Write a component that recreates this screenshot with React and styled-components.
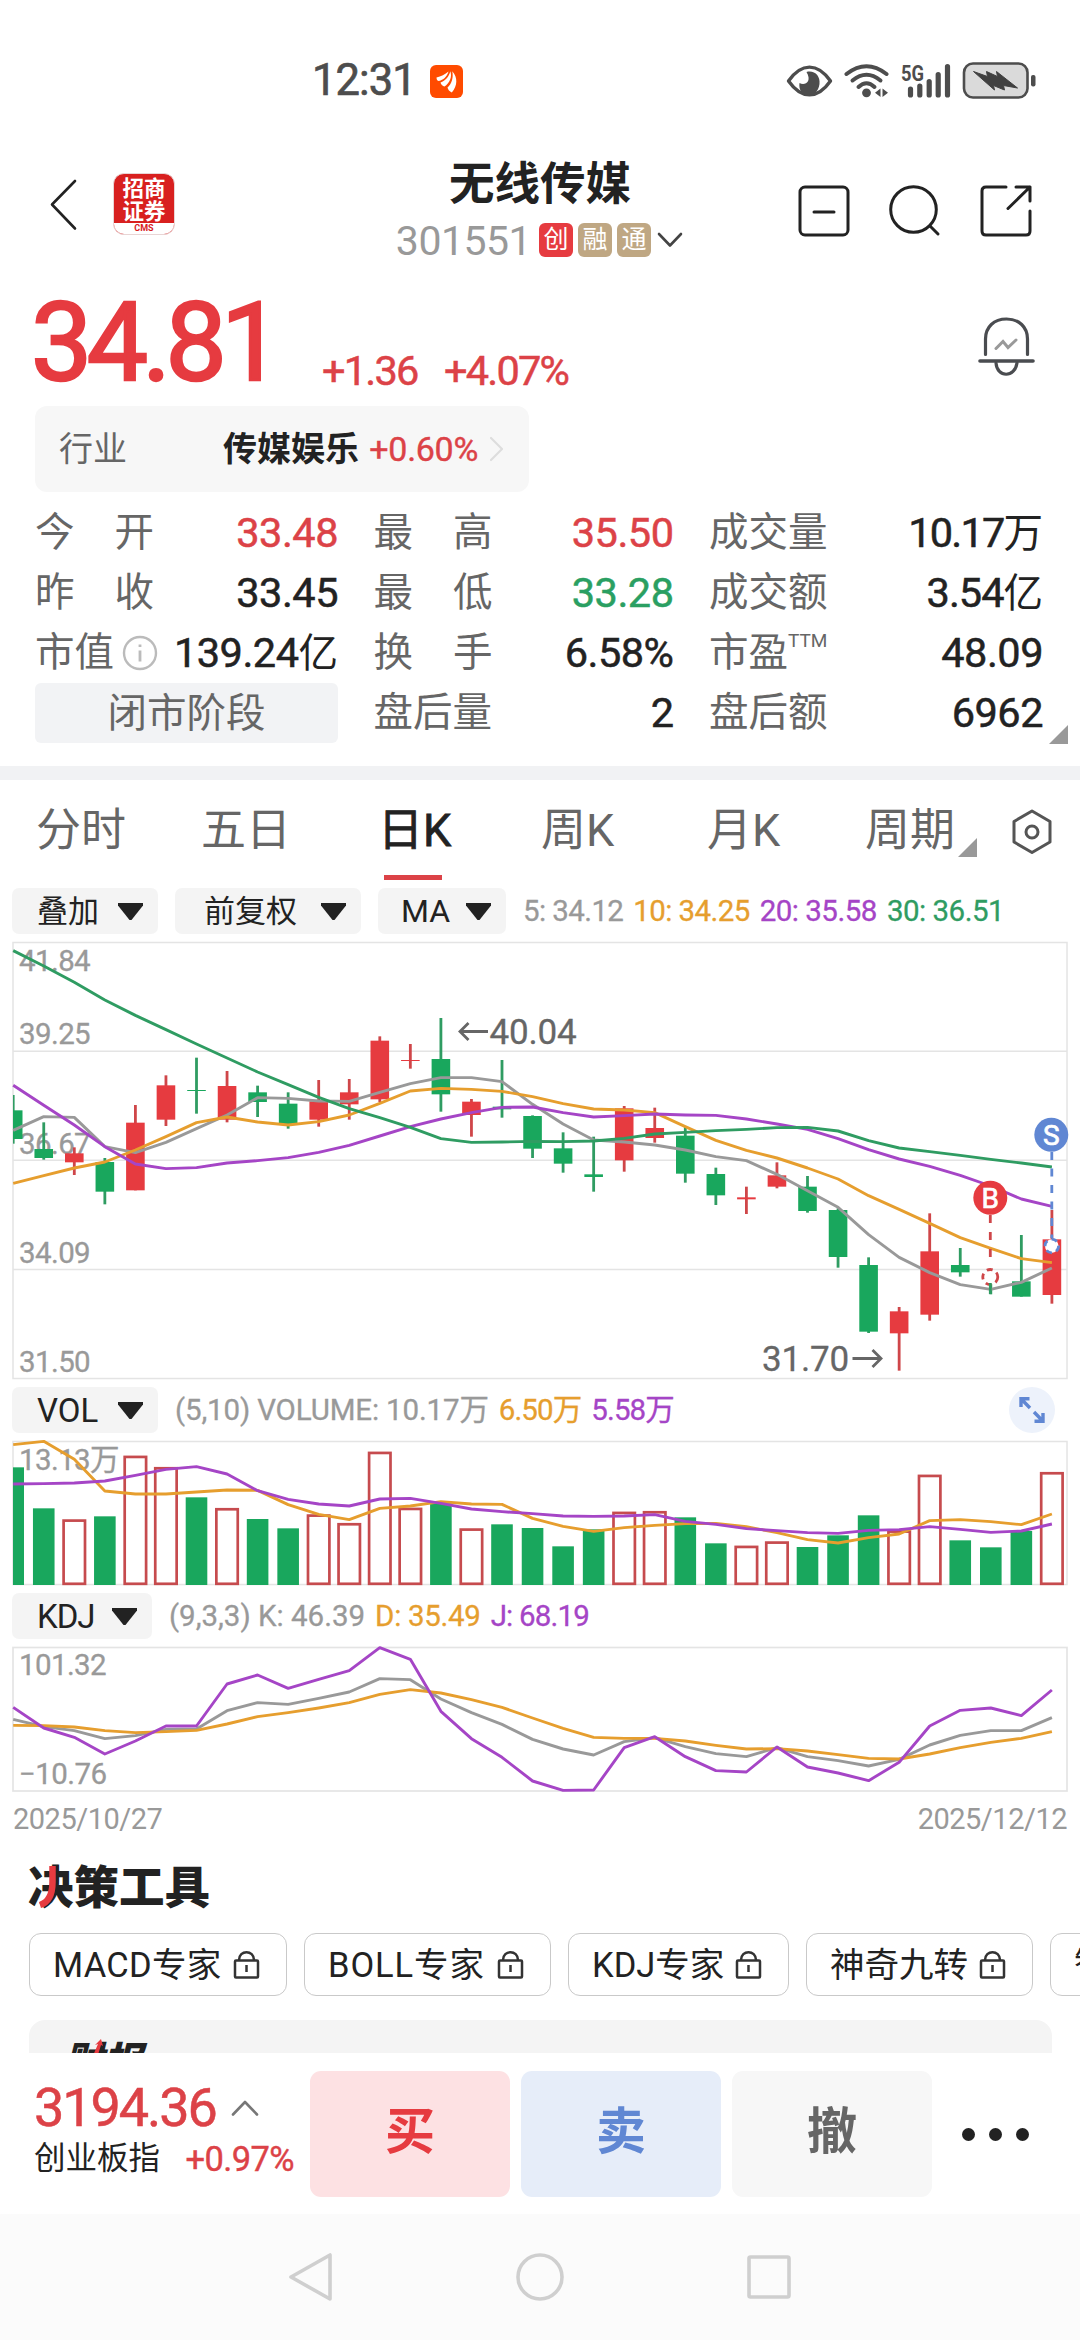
import React from "react";
import styled, { createGlobalStyle } from "styled-components";

const RED = "#e63b40";
const TEXT_RED = "#dc4247";
const GREEN = "#19a75d";
const ORANGE = "#e69e2e";
const PURPLE = "#a545c6";
const GRAY = "#999999";

const GlobalStyle = createGlobalStyle`
  * {
    box-sizing: border-box;
  }
  body {
    margin: 0;
    background: #fff;
    font-family: Roboto, "Noto Sans CJK SC", sans-serif;
    color: #222;
  }
  svg {
    display: block;
    flex-shrink: 0;
  }
  text {
    font-family: Roboto, "Noto Sans CJK SC", sans-serif;
  }
`;

const Screen = styled.div`
  display: flex;
  flex-direction: column;
  width: 1080px;
  height: 2340px;
  overflow: hidden;
  background: #fff;
  white-space: nowrap;
`;

/* ---------- status bar ---------- */

const StatusBar = styled.div`
  display: flex;
  align-items: center;
  height: 140px;
  padding: 22px 43px 0 312px;
  flex-shrink: 0;
`;

const Clock = styled.span`
  width: 118px;
  font-size: 43.5px;
  line-height: 50px;
  letter-spacing: -0.9px;
  color: #4d4d4d;
  -webkit-text-stroke: 0.7px #4d4d4d;
`;

const StatusIcons = styled.div`
  display: flex;
  align-items: center;
  margin-left: auto;
`;

/* ---------- header ---------- */

const Header = styled.header`
  display: flex;
  height: 130px;
  flex-shrink: 0;
`;

const HeaderLeft = styled.div`
  display: flex;
  align-items: flex-start;
  width: 380px;
  padding: 33px 0 0 48px;
`;

const BrandLogo = styled.div`
  display: flex;
  flex-direction: column;
  width: 62px;
  height: 62px;
  margin-left: 35px;
  border-radius: 11px;
  overflow: hidden;
  background: #d8201f;
  border: 1px solid #e9d5d5;
  color: #fff;
  font-size: 21.5px;
  line-height: 23px;
  font-weight: 700;
  text-align: center;
  padding-top: 3px;
`;

const BrandFoot = styled.div`
  margin-top: auto;
  height: 11px;
  background: #fff;
  color: #d8201f;
  font-size: 9px;
  line-height: 10px;
`;

const TitleBlock = styled.div`
  display: flex;
  flex-direction: column;
  align-items: center;
  width: 320px;
  padding-top: 15px;
`;

const Title = styled.h1`
  margin: 0;
  font-size: 45.5px;
  line-height: 60px;
  font-weight: 700;
  color: #222;
`;

const CodeRow = styled.div`
  display: flex;
  align-items: center;
  gap: 5px;
  height: 50px;
`;

const Code = styled.span`
  font-size: 41px;
  line-height: 52px;
  letter-spacing: -0.5px;
  color: #999;
  margin-right: 3px;
  padding-top: 2px;
`;

const Tag = styled.span`
  width: 34px;
  height: 34px;
  border-radius: 6px;
  background: ${({ $red }) => ($red ? RED : "#bfa783")};
  color: #fff;
  font-size: 25px;
  line-height: 33px;
  text-align: center;
`;

const HeaderIcons = styled.div`
  display: flex;
  gap: 37px;
  margin-left: auto;
  padding: 44px 47px 0 0;
`;

/* ---------- quote ---------- */

const QuoteRow = styled.div`
  display: flex;
  height: 136px;
  padding-left: 31px;
  flex-shrink: 0;
`;

const Price = styled.div`
  width: 291px;
  font-size: 109px;
  line-height: 146px;
  letter-spacing: -5.6px;
  color: ${RED};
  -webkit-text-stroke: 2.4px ${RED};
`;

const Change = styled.div`
  width: 122px;
  padding-top: 76px;
  font-size: 41.5px;
  line-height: 50px;
  letter-spacing: -1.8px;
  color: ${TEXT_RED};
  -webkit-text-stroke: 0.5px ${TEXT_RED};
`;

const BellWrap = styled.div`
  margin-left: auto;
  padding: 44px 45px 0 0;
`;

const Industry = styled.div`
  display: flex;
  align-items: center;
  width: 494px;
  height: 86px;
  margin-left: 35px;
  padding: 0 24px;
  border-radius: 12px;
  background: #f7f7f7;
  font-size: 34px;
  line-height: 50px;
  color: #666;
  flex-shrink: 0;
`;

const IndustryName = styled.b`
  margin-left: 96px;
  width: 148px;
  font-weight: 700;
  color: #222;
`;

const IndustryChange = styled.span`
  width: 121px;
  letter-spacing: -0.3px;
  color: ${TEXT_RED};
  -webkit-text-stroke: 0.4px ${TEXT_RED};
`;

const Stats = styled.div`
  display: grid;
  grid-template-columns: 303px 300px 334px;
  column-gap: 35.5px;
  grid-auto-rows: 60px;
  margin: 11px 0 0 35px;
  height: 251px;
  flex-shrink: 0;
`;

const Stat = styled.div`
  display: flex;
  align-items: center;
  justify-content: space-between;
  font-size: 39.5px;
  line-height: 60px;
`;

const StatLabel = styled.span`
  display: flex;
  align-items: center;
  justify-content: space-between;
  width: ${({ $spread }) => ($spread ? "119px" : "auto")};
  color: #666;
`;

const StatValue = styled.span`
  font-size: 41.5px;
  letter-spacing: ${({ $ls }) => $ls}px;
  color: ${({ $color }) => $color || "#222"};
  -webkit-text-stroke: 0.5px currentColor;

  small {
    font-size: 39.5px;
    letter-spacing: 0;
    -webkit-text-stroke: 0;
  }
`;

const Superscript = styled.span`
  align-self: flex-start;
  margin-top: -12px;
  font-size: 19px;
`;

const Phase = styled.div`
  height: 60px;
  border-radius: 6px;
  background: #f2f3f5;
  color: #666;
  font-size: 39.5px;
  line-height: 61px;
  text-align: center;
`;

const CornerRow = styled.div`
  display: flex;
  justify-content: flex-end;
  height: 19px;
  margin-top: -29px;
  padding-right: 12px;
  margin-bottom: 22px;
  flex-shrink: 0;
`;

const Corner = styled.i`
  width: 19px;
  height: 19px;
  background: #999;
  clip-path: polygon(100% 0, 100% 100%, 0 100%);
`;

const Divider = styled.div`
  height: 14px;
  background: #f1f2f4;
  flex-shrink: 0;
`;

/* ---------- chart tabs and indicator bars ---------- */

const Tabs = styled.nav`
  display: grid;
  grid-template-columns: 165px 177px 163px 166px 158px 146px 41px;
  height: 108px;
  padding-left: 36px;
  flex-shrink: 0;
`;

const Tab = styled.div`
  display: flex;
  flex-direction: column;
  align-items: flex-start;
  padding-top: 3px;
  font-size: 45px;
  line-height: 95px;
  color: ${({ $active }) => ($active ? "#222" : "#666")};
  -webkit-text-stroke: ${({ $active }) => ($active ? "0.8px #222" : "0")};

  &::after {
    content: "";
    width: 58px;
    height: 5px;
    margin: -3px 0 0 6px;
    background: ${({ $active }) => ($active ? TEXT_RED : "transparent")};
  }
`;

const TabLine = styled.span`
  display: flex;
  align-items: flex-end;

  ${Corner} {
    margin: 0 0 21px 3px;
  }
`;

const Hexagon = styled.div`
  padding-top: 28px;
`;

const Bar = styled.div`
  display: flex;
  align-items: center;
  height: 46px;
  padding: 0 25px 0 12px;
  flex-shrink: 0;
`;

const Picker = styled.div`
  display: flex;
  align-items: center;
  justify-content: space-between;
  width: ${({ $w }) => $w}px;
  height: 46px;
  margin-right: 17px;
  padding: 1px 15px 0 ${({ $pad }) => $pad || 25}px;
  border-radius: 7px;
  background: #f4f4f4;
  font-size: ${({ $size }) => $size || 31}px;
  line-height: 45px;
  letter-spacing: ${({ $ls }) => $ls || 0}px;
  color: #222;

  &::after {
    content: "";
    width: 25px;
    height: 17px;
    background: #222;
    clip-path: polygon(0 0, 100% 0, 100% 15%, 54% 100%, 46% 100%, 0 15%);
  }
`;

const Legend = styled.div`
  display: flex;
  gap: 10px;
  padding-top: 1px;
  font-size: 29.5px;
  line-height: 45px;
`;

const Reading = styled.span`
  color: ${({ $color }) => $color};
  letter-spacing: ${({ $ls }) => $ls || 0}px;
  -webkit-text-stroke: 0.3px currentColor;
`;

const Expand = styled.div`
  display: flex;
  align-items: center;
  justify-content: center;
  width: 46px;
  height: 46px;
  margin-left: auto;
  border-radius: 50%;
  background: #edf2fb;
`;

const Dates = styled.div`
  display: flex;
  justify-content: space-between;
  height: 56px;
  padding: 0 13px;
  font-size: 29px;
  line-height: 40px;
  letter-spacing: -0.5px;
  color: #999;
  flex-shrink: 0;
`;

/* ---------- tools ---------- */

const ToolsTitle = styled.h2`
  display: flex;
  position: relative;
  margin: 0;
  height: 78px;
  padding-left: 28px;
  font-size: 45.5px;
  line-height: 67px;
  font-weight: 900;
  color: #222;
  flex-shrink: 0;
`;

const TitleStroke = styled.svg`
  position: absolute;
  left: 35px;
  top: 10px;
`;

const ToolRow = styled.div`
  display: flex;
  gap: 17px;
  height: 63px;
  padding-left: 29px;
  flex-shrink: 0;
`;

const Tool = styled.div`
  display: flex;
  align-items: center;
  justify-content: space-between;
  width: ${({ $w }) => $w}px;
  height: 63px;
  padding: 0 26px 0 23px;
  border: 1.5px solid #c9c9c9;
  border-radius: 12px;
  font-size: 34.5px;
  line-height: 60px;
  letter-spacing: ${({ $ls }) => $ls || 0}px;
  flex-shrink: 0;
`;

const ReportCard = styled.div`
  position: relative;
  height: 33px;
  margin: 24px 28px 0 29px;
  padding: 18px 0 0 35px;
  border-radius: 16px 16px 0 0;
  background: #f4f4f4;
  overflow: hidden;
  font-size: 39px;
  line-height: 48px;
  font-weight: 900;
  font-style: italic;
  flex-shrink: 0;
`;

const ReportAccent = styled.svg`
  position: absolute;
  left: 59px;
  top: 18px;
`;

/* ---------- trade bar ---------- */

const TradeBar = styled.footer`
  display: flex;
  height: 161px;
  padding: 18px 0 0 34px;
  flex-shrink: 0;
`;

const IndexBlock = styled.div`
  width: 276px;
`;

const IndexTop = styled.div`
  display: flex;
  align-items: center;
  height: 73px;
  font-size: 54px;
  letter-spacing: -2.1px;
  color: ${TEXT_RED};
  gap: 15px;
  -webkit-text-stroke: 0.5px ${TEXT_RED};
`;

const IndexBottom = styled.div`
  display: flex;
  justify-content: space-between;
  height: 46px;
  padding-right: 16px;
  font-size: 31.5px;
  line-height: 30px;
`;

const IndexChange = styled.span`
  font-size: 34.5px;
  letter-spacing: -0.6px;
  color: ${TEXT_RED};
  -webkit-text-stroke: 0.4px ${TEXT_RED};
`;

const TradeButton = styled.button`
  width: 200px;
  height: 126px;
  margin-right: 11px;
  border: none;
  border-radius: 11px;
  background: ${({ $bg }) => $bg};
  color: ${({ $fg }) => $fg};
  font-family: inherit;
  font-size: 50px;
  line-height: 122px;
  font-weight: 700;
  padding: 0 0 4px;
`;

const More = styled.div`
  display: flex;
  align-items: center;
  gap: 14px;
  height: 126px;
  margin-left: 19px;

  i {
    width: 13px;
    height: 13px;
    border-radius: 50%;
    background: #222;
  }
`;

const SystemNav = styled.div`
  display: flex;
  justify-content: center;
  align-items: center;
  gap: 182px;
  height: 126px;
  background: #fbfbfb;
  flex-shrink: 0;
`;

/* ---------- chart data, y values in thirds of a pixel ---------- */

// [up, wick top, body top, body bottom, wick bottom]
const CANDLES = [
  [0, 495, 541, 627, 641],
  [0, 577, 657, 684, 689],
  [1, 652, 670, 697, 735],
  [0, 684, 696, 785, 823],
  [1, 525, 578, 781, 781],
  [1, 436, 466, 569, 588],
  [0, 383, 480, 483, 551],
  [1, 423, 468, 569, 577],
  [0, 467, 487, 516, 561],
  [0, 487, 521, 582, 596],
  [1, 450, 514, 569, 590],
  [1, 447, 487, 523, 569],
  [1, 319, 332, 508, 516],
  [1, 342, 390, 393, 416],
  [0, 264, 387, 493, 545],
  [1, 507, 515, 555, 620],
  [0, 390, 530, 538, 563],
  [0, 556, 558, 656, 684],
  [0, 607, 655, 701, 728],
  [0, 620, 733, 741, 785],
  [1, 528, 535, 691, 725],
  [1, 533, 594, 624, 638],
  [0, 588, 617, 731, 758],
  [0, 713, 732, 796, 825],
  [1, 770, 802, 808, 852],
  [1, 697, 736, 770, 775],
  [0, 738, 770, 843, 848],
  [0, 835, 840, 981, 1013],
  [0, 982, 1005, 1205, 1209],
  [1, 1131, 1144, 1210, 1322],
  [1, 850, 964, 1154, 1172],
  [0, 954, 1005, 1027, 1040],
  [0, 1060, 1078, 1078, 1093],
  [0, 915, 1054, 1100, 1100],
  [1, 840, 928, 1095, 1121],
];

const MA = [
  [GRAY, [601, 560, 562, 650, 668, 637, 596, 555, 503, 505, 513, 514, 487, 461, 443, 443, 455, 523, 582, 630, 636, 645, 660, 680, 692, 733, 782, 832, 914, 982, 1028, 1064, 1078, 1057, 1014]],
  [ORANGE, [760, 737, 714, 696, 660, 620, 578, 561, 576, 585, 575, 555, 520, 483, 475, 478, 484, 500, 521, 537, 540, 548, 590, 631, 661, 684, 714, 747, 797, 838, 880, 923, 955, 986, 998]],
  [PURPLE, [466, 526, 585, 650, 702, 716, 713, 699, 692, 683, 667, 646, 618, 590, 567, 548, 532, 531, 548, 561, 557, 552, 555, 556, 567, 582, 598, 626, 659, 687, 709, 736, 768, 807, 829]],
  ["#2f9c62", [62, 108, 157, 210, 256, 299, 342, 384, 426, 464, 502, 536, 563, 592, 626, 637, 636, 634, 635, 633, 625, 612, 607, 602, 598, 593, 592, 603, 632, 654, 665, 676, 688, 699, 711]],
];

const VOLUMES = [
  262, 385, 420, 409, 229, 263, 352, 386, 417, 445, 405, 431, 217, 385, 370, 447, 433, 444, 499,
  448, 397, 395, 412, 490, 499, 486, 501, 466, 406, 453, 286, 481, 502, 453, 278,
];

const VOL_LINES = [
  [ORANGE, [194, 184, 238, 333, 342, 342, 336, 330, 331, 374, 403, 419, 385, 378, 365, 372, 373, 415, 439, 454, 443, 436, 431, 430, 440, 458, 479, 489, 473, 462, 422, 419, 425, 434, 402]],
  [PURPLE, [312, 311, 309, 303, 286, 268, 260, 282, 332, 358, 372, 378, 357, 355, 370, 387, 395, 401, 408, 409, 408, 404, 424, 433, 446, 452, 458, 460, 451, 449, 440, 448, 457, 453, 432]],
];

const KDJ_LINES = [
  [GRAY, [1018, 1040, 1052, 1076, 1067, 1048, 1047, 992, 968, 973, 955, 936, 896, 899, 957, 998, 1033, 1078, 1107, 1125, 1085, 1073, 1100, 1121, 1130, 1103, 1130, 1142, 1158, 1138, 1095, 1066, 1052, 1052, 1013]],
  [ORANGE, [1036, 1037, 1041, 1052, 1058, 1055, 1051, 1032, 1010, 998, 984, 968, 943, 929, 939, 959, 982, 1014, 1045, 1072, 1075, 1075, 1083, 1096, 1107, 1106, 1113, 1124, 1135, 1137, 1122, 1103, 1087, 1075, 1055]],
  [PURPLE, [982, 1044, 1072, 1122, 1083, 1038, 1038, 912, 885, 925, 898, 872, 803, 838, 994, 1076, 1132, 1203, 1231, 1230, 1103, 1070, 1130, 1172, 1176, 1101, 1161, 1179, 1202, 1147, 1038, 991, 984, 1007, 930]],
];

const cx = (i) => 13.2 + i * 30.55;

function Lines({ series }) {
  return series.map(([color, values]) => (
    <polyline
      key={color}
      points={values.map((v, i) => `${cx(i)},${v / 3}`).join(" ")}
      fill="none"
      stroke={color}
      strokeWidth="2.9"
      strokeLinejoin="round"
    />
  ));
}

function AxisText({ y, children }) {
  return (
    <text x="19" y={y} fontSize="29.5" letterSpacing="-0.6" fill={GRAY} stroke={GRAY} strokeWidth="0.3">
      {children}
    </text>
  );
}

function Marker({ x, y, color, children }) {
  return (
    <>
      <circle cx={x} cy={y} r="17" fill={color} />
      <text x={x} y={y + 9.8} fontSize="28" textAnchor="middle" fill="#fff" stroke="#fff" strokeWidth="0.7">
        {children}
      </text>
    </>
  );
}

function PriceChart() {
  return (
    <svg width="1080" height="453" viewBox="0 4 1080 453">
      <g stroke="#e4e4e4" strokeWidth="1.5" fill="none">
        <rect x="13" y="12.5" width="1054" height="436" />
        <path d="M13 121.2H1067M13 230.3H1067M13 339.5H1067" />
      </g>
      <AxisText y="40.5">41.84</AxisText>
      <AxisText y="114">39.25</AxisText>
      <AxisText y="223.5">36.67</AxisText>
      <AxisText y="332.5">34.09</AxisText>
      <AxisText y="441.5">31.50</AxisText>
      {CANDLES.map(([up, high, top, bottom, low], i) => {
        const x = cx(i);
        const left = i === 0 ? 13 : x - 9.3;
        return (
          <g key={i} fill={up ? RED : GREEN}>
            <rect
              x={i === 0 ? 13 : x - 1.4}
              y={high / 3}
              width={i === 0 ? 1.6 : 2.8}
              height={(low - high) / 3}
              fill={up ? "#cf4649" : "#2f9c62"}
            />
            <rect x={left} y={top / 3} width={x + 9.3 - left} height={(bottom - top) / 3} />
          </g>
        );
      })}
      <Lines series={MA} />

      <g fontSize="35" fill="#666" stroke="#666" strokeWidth="0.3" letterSpacing="-0.2">
        <text x="489.5" y="114">
          40.04
        </text>
        <text x="762" y="441">
          31.70
        </text>
      </g>
      <g stroke="#666" strokeWidth="2.8" fill="none">
        <path d="M488 101.5H460M468.5 93L460 101.5L468.5 110" />
        <path d="M852.5 428.5H881M872.5 420L881 428.5L872.5 437" />
      </g>

      <path d="M990.3 285V333" stroke="#cf4649" strokeWidth="2.8" strokeDasharray="8 9" />
      <circle cx="990.3" cy="347" r="7.5" fill="#fff" stroke="#cf4649" strokeWidth="2.8" strokeDasharray="6 4.5" />
      <path d="M990.3 353V364" stroke="#2f9c62" strokeWidth="2.8" />
      <Marker x={990.3} y={267.7} color={RED}>
        B
      </Marker>

      <path d="M1051.8 222V308" stroke="#6087d3" strokeWidth="2.8" strokeDasharray="8 8.5" />
      <circle cx="1051.8" cy="316" r="6.8" fill="#fff" stroke="#6087d3" strokeWidth="2.8" strokeDasharray="6 4.5" />
      <Marker x={1051.3} y={204.7} color="#6087d3">
        S
      </Marker>
    </svg>
  );
}

function VolumeChart() {
  return (
    <svg width="1080" height="160" viewBox="0 53 1080 160">
      <rect x="13" y="61.5" width="1054" height="143" fill="none" stroke="#e4e4e4" strokeWidth="1.5" />
      {VOLUMES.map((v, i) => {
        const x = cx(i);
        const y = v / 3;
        if (CANDLES[i][0]) {
          return (
            <rect key={i} x={x - 10.7} y={y + 0.6} width="21.4" height={203.2 - y} fill="#fff" stroke="#c64b4e" strokeWidth="2.7" />
          );
        }
        const left = i === 0 ? 13 : x - 10.8;
        return <rect key={i} x={left} y={y} width={x + 10.8 - left} height={205 - y} fill={GREEN} />;
      })}
      <AxisText y="89.5">13.13万</AxisText>
      <Lines series={VOL_LINES} />
    </svg>
  );
}

function KdjChart() {
  return (
    <svg width="1080" height="160" viewBox="0 259 1080 160">
      <rect x="13" y="267.5" width="1054" height="143.5" fill="none" stroke="#e4e4e4" strokeWidth="1.7" />
      <AxisText y="295">101.32</AxisText>
      <AxisText y="404">−10.76</AxisText>
      <Lines series={KDJ_LINES} />
    </svg>
  );
}

/* ---------- icons ---------- */

function AppBadge() {
  return (
    <svg width="33" height="33" viewBox="0 0 33 33">
      <rect width="33" height="33" rx="6" fill="#ff4b00" />
      <path d="M6.500 12.500C11 11.500 15 9.500 18.500 6.500C17 12 12.500 15.500 8.500 16C7 15.500 6.500 14 6.500 12.500Z" fill="#fff" />
      <path d="M10.500 17.500C15.500 15.500 19 11.500 20.300 6.200C22.500 12 19.500 18 14.500 21.500C12.500 21 11 19.500 10.500 17.500Z" fill="#fff" />
      <path d="M17.500 22.500C22 18.500 23.500 12.500 22.300 6.200C28 12.500 27.500 21 21.800 27.500C19.500 26.500 18 24.500 17.500 22.500Z" fill="#fff" />
    </svg>
  );
}

function StatusGlyphs() {
  return (
    <svg width="254" height="40" viewBox="783.5 61 254 40">
      <g fill="none" stroke="#4d4d4d" strokeLinecap="round" strokeLinejoin="round">
        <path d="M789 81C802 62.5 818 62.5 831 81C818 99.5 802 99.5 789 81Z" strokeWidth="3.4" />
        <path d="M847 74Q867 58.500 887 74" strokeWidth="4" />
        <path d="M853 80.5Q867 69 881 80.5" strokeWidth="4" />
        <path d="M859 87Q867 79.5 875 87" strokeWidth="4" />
        <path d="M911 89V95M920.3 86V95M929.7 81.5V95M938.7 74.5V95M948 66.5V95" strokeWidth="5.2" />
      </g>
      <path d="M807 72C815 70 821 76 820 84C819 92 814 95 809 95C802 95 799 89 800 83C805 86 813 82 807 72Z" fill="#4d4d4d" />
      <circle cx="867" cy="92.8" r="4.4" fill="#4d4d4d" />
      <path d="M881 88.5V97L875.5 92.7ZM883 88.5V97L888.5 92.7Z" fill="#4d4d4d" />
      <text x="901.5" y="80.500" fontSize="22" fontWeight="700" fill="#4d4d4d" textLength="23" lengthAdjust="spacingAndGlyphs">
        5G
      </text>
      <rect x="964.5" y="63.5" width="63.500" height="34" rx="9" fill="#dadada" stroke="#4d4d4d" strokeWidth="2.6" />
      <path d="M974 71.5L988 76.5L987 71.5L998 76.5L997 71.5L1018 88L1004 85.5L1005 90L994 85.5L995 90Z" fill="#404040" stroke="#404040" strokeLinejoin="round" />
      <rect x="1031.5" y="75" width="4.5" height="11.5" rx="2" fill="#4d4d4d" />
    </svg>
  );
}

function BackIcon() {
  return (
    <svg width="30" height="62" viewBox="48 173 30 62">
      <path d="M75 181L52 204.5L75 228.5" fill="none" stroke="#222" strokeWidth="2.6" strokeLinecap="round" strokeLinejoin="round" />
    </svg>
  );
}

function HeaderGlyph({ children }) {
  return (
    <svg width="54" height="54" viewBox="0 0 54 54" fill="none" stroke="#222" strokeWidth="3" strokeLinecap="round" strokeLinejoin="round">
      {children}
    </svg>
  );
}

function BellIcon() {
  return (
    <svg width="58" height="62" viewBox="0 0 58 62" fill="none" stroke="#4a4c50" strokeWidth="3.2" strokeLinecap="round">
      <path d="M8.500 40.5V25C8.500 13 17 5 29.500 5C42 5 50.500 13 50.500 25V40.5" />
      <path d="M3 47H56" strokeWidth="3.600" />
      <path d="M19 49C20 64 38 64 40 49" />
      <path d="M19 34.500L26 27.500L31 33.500L39 26" stroke="#999" strokeWidth="3" />
    </svg>
  );
}

function Chevron({ d, w, h, color, sw = 2.6 }) {
  return (
    <svg width={w} height={h} fill="none" stroke={color} strokeWidth={sw} strokeLinecap="round" strokeLinejoin="round">
      <path d={d} />
    </svg>
  );
}

function InfoIcon() {
  return (
    <svg width="36" height="36" viewBox="0 0 36 36" fill="none" stroke="#bbb" strokeWidth="2.4">
      <circle cx="18" cy="18" r="16" />
      <path d="M18 15.5V26.5M18 9.5V12" strokeWidth="2.8" />
    </svg>
  );
}

function LockIcon() {
  return (
    <svg width="27" height="30" viewBox="0 0 27 30" fill="none" stroke="#333" strokeWidth="2.5" strokeLinejoin="round">
      <rect x="2" y="10.5" width="23" height="17" rx="1" />
      <path d="M6 10C6 -0.5 21 -0.5 21 10M13.5 15V22" />
    </svg>
  );
}

const STATS = [
  { label: "今开", value: "33.48", color: TEXT_RED },
  { label: "最高", value: "35.50", color: TEXT_RED },
  { label: "成交量", value: "10.17", unit: "万", ls: -1.8 },
  { label: "昨收", value: "33.45" },
  { label: "最低", value: "33.28", color: "#2a9f62" },
  { label: "成交额", value: "3.54", unit: "亿", ls: -1 },
  { label: "市值", value: "139.24", unit: "亿", info: true },
  { label: "换手", value: "6.58%" },
  { label: "市盈", value: "48.09", ttm: true },
  { phase: "闭市阶段" },
  { label: "盘后量", value: "2" },
  { label: "盘后额", value: "6962" },
];

function StatCell({ label, value, color, unit, info, ttm, phase, ls = -0.5 }) {
  if (phase) return <Phase>{phase}</Phase>;
  const spread = label.length === 2 && !info && !ttm;
  return (
    <Stat>
      <StatLabel $spread={spread}>
        {spread ? [...label].map((c) => <span key={c}>{c}</span>) : <span>{label}</span>}
        {info && (
          <>
            &#8202;&#8202;
            <InfoIcon />
          </>
        )}
        {ttm && <Superscript>TTM</Superscript>}
      </StatLabel>
      <StatValue $color={color} $ls={ls}>
        {value}
        {unit && <small>{unit}</small>}
      </StatValue>
    </Stat>
  );
}

function App() {
  return (
    <>
      <GlobalStyle />
      <Screen>
        <StatusBar>
          <Clock>12:31</Clock>
          <AppBadge />
          <StatusIcons>
            <StatusGlyphs />
          </StatusIcons>
        </StatusBar>

        <Header>
          <HeaderLeft>
            <BackIcon />
            <BrandLogo>
              <span>招商</span>
              <span>证券</span>
              <BrandFoot>CMS</BrandFoot>
            </BrandLogo>
          </HeaderLeft>
          <TitleBlock>
            <Title>无线传媒</Title>
            <CodeRow>
              <Code>301551</Code>
              <Tag $red>创</Tag>
              <Tag>融</Tag>
              <Tag>通</Tag>
              <Chevron w={28} h={16} d="M3 2L14 13.5L25 2" color="#444" />
            </CodeRow>
          </TitleBlock>
          <HeaderIcons>
            <HeaderGlyph>
              <rect x="3" y="3" width="48" height="48" rx="5" />
              <path d="M17 28H37" />
            </HeaderGlyph>
            <HeaderGlyph>
              <circle cx="25.5" cy="25.5" r="22.8" />
              <path d="M42 42L50 50" />
            </HeaderGlyph>
            <HeaderGlyph>
              <path d="M27 3H7Q3 3 3 7V47Q3 51 7 51H47Q51 51 51 47V27M37 3H51V17M51 3L29 24.5" />
            </HeaderGlyph>
          </HeaderIcons>
        </Header>

        <QuoteRow>
          <Price>34.81</Price>
          <Change>+1.36</Change>
          <Change>+4.07%</Change>
          <BellWrap>
            <BellIcon />
          </BellWrap>
        </QuoteRow>

        <Industry>
          行业
          <IndustryName>传媒娱乐</IndustryName>
          <IndustryChange>+0.60%</IndustryChange>
          <Chevron w={16} h={28} d="M2 3L13 14L2 25" color="#ddd" sw={2.2} />
        </Industry>

        <Stats>
          {STATS.map((s) => (
            <StatCell key={s.label || s.phase} {...s} />
          ))}
        </Stats>
        <CornerRow>
          <Corner />
        </CornerRow>

        <Divider />

        <Tabs>
          <Tab>分时</Tab>
          <Tab>五日</Tab>
          <Tab $active>日K</Tab>
          <Tab>周K</Tab>
          <Tab>月K</Tab>
          <Tab>
            <TabLine>
              周期
              <Corner />
            </TabLine>
          </Tab>
          <Hexagon>
            <svg width="42" height="48" viewBox="0 0 42 48" fill="none" stroke="#555" strokeWidth="3" strokeLinejoin="round">
              <path d="M21 3L39 13.5V34L21 44.5L3 34V13.5Z" />
              <circle cx="21" cy="24" r="6" />
            </svg>
          </Hexagon>
        </Tabs>

        <Bar>
          <Picker $w={146}>叠加</Picker>
          <Picker $w={186} $pad={29}>
            前复权
          </Picker>
          <Picker $w={128} $pad={23} $size={32}>
            MA
          </Picker>
          <Legend>
            <Reading $color={GRAY} $ls={-0.6}>
              5: 34.12
            </Reading>
            <Reading $color={ORANGE} $ls={-0.6}>
              10: 34.25
            </Reading>
            <Reading $color={PURPLE} $ls={-0.5}>
              20: 35.58
            </Reading>
            <Reading $color="#2f9c62" $ls={-0.5}>
              30: 36.51
            </Reading>
          </Legend>
        </Bar>
        <PriceChart />

        <Bar>
          <Picker $w={146} $size={33}>
            VOL
          </Picker>
          <Legend>
            <Reading $color={GRAY} $ls={-0.15}>
              (5,10) VOLUME: 10.17万
            </Reading>
            <Reading $color={ORANGE} $ls={-0.9}>
              6.50万
            </Reading>
            <Reading $color={PURPLE} $ls={-0.9}>
              5.58万
            </Reading>
          </Legend>
          <Expand>
            <svg width="28" height="28" viewBox="0 0 28 28" fill="none" stroke="#6087d3" strokeWidth="3.4">
              <path d="M3 11V2.7H11.5M3 2.7L12 12M25 17V25.3H16.5M25 25.3L16 16" />
            </svg>
          </Expand>
        </Bar>
        <VolumeChart />

        <Bar>
          <Picker $w={140} $size={33} $ls={-1}>
            KDJ
          </Picker>
          <Legend>
            <Reading $color={GRAY}>(9,3,3) K: 46.39</Reading>
            <Reading $color={ORANGE} $ls={-0.3}>
              D: 35.49
            </Reading>
            <Reading $color={PURPLE} $ls={-0.8}>
              J: 68.19
            </Reading>
          </Legend>
        </Bar>
        <KdjChart />

        <Dates>
          <span>2025/10/27</span>
          <span>2025/12/12</span>
        </Dates>

        <ToolsTitle>
          决策工具
          <TitleStroke width="24" height="46" viewBox="0 0 24 46">
            <path d="M17.5 1V17Q17.5 36 5 40" fill="none" stroke={RED} strokeWidth="6.5" />
          </TitleStroke>
        </ToolsTitle>

        <ToolRow>
          <Tool $w={258} $ls={0.3}>
            MACD专家
            <LockIcon />
          </Tool>
          <Tool $w={247} $ls={0.9}>
            BOLL专家
            <LockIcon />
          </Tool>
          <Tool $w={221}>
            KDJ专家
            <LockIcon />
          </Tool>
          <Tool $w={227}>
            神奇九转
            <LockIcon />
          </Tool>
          <Tool $w={227}>智能</Tool>
        </ToolRow>

        <ReportCard>
          财报
          <ReportAccent width="18" height="20" viewBox="0 0 18 20">
            <path d="M4 20L10 6L7 7L13 1L15 8L13 7L9 20Z" fill={RED} />
          </ReportAccent>
        </ReportCard>

        <TradeBar>
          <IndexBlock>
            <IndexTop>
              3194.36
              <Chevron w={28} h={18} d="M2 15.5L14 3L26 15.5" color="#777" />
            </IndexTop>
            <IndexBottom>
              创业板指
              <IndexChange>+0.97%</IndexChange>
            </IndexBottom>
          </IndexBlock>
          <TradeButton $bg="#fde1e3" $fg={RED}>
            买
          </TradeButton>
          <TradeButton $bg="#e6edf9" $fg="#6087d3">
            卖
          </TradeButton>
          <TradeButton $bg="#f7f7f7" $fg="#666">
            撤
          </TradeButton>
          <More>
            <i />
            <i />
            <i />
          </More>
        </TradeBar>

        <SystemNav>
          <svg width="46" height="52" viewBox="0 0 46 52" fill="none" stroke="#cfcfcf" strokeWidth="3.6" strokeLinejoin="round">
            <path d="M42 4V48L3 26Z" />
          </svg>
          <svg width="48" height="48" viewBox="0 0 48 48" fill="none" stroke="#cfcfcf" strokeWidth="3.6">
            <circle cx="24" cy="24" r="22" />
          </svg>
          <svg width="46" height="46" viewBox="0 0 46 46" fill="none" stroke="#cfcfcf" strokeWidth="3.6">
            <rect x="3" y="3" width="40" height="40" rx="1.5" />
          </svg>
        </SystemNav>
      </Screen>
    </>
  );
}

export default App;
